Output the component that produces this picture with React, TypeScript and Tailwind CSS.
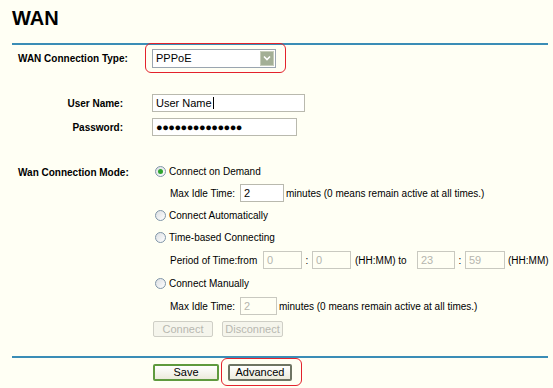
import React from 'react';

const font = { fontFamily: '"Liberation Sans", Arial, sans-serif' };

const Radio = ({ checked = false }: { checked?: boolean }) => (
  <span className="ml-[3px] mr-[3px] flex h-[11px] w-[11px] shrink-0 items-center justify-center rounded-full border border-[#7f95a8] bg-gradient-to-br from-[#dcdfe3] to-white">
    {checked && <span className="h-[5px] w-[5px] rounded-full bg-[#2fa52f]" />}
  </span>
);

const Field = ({ value, w, disabled = false }: { value: string; w: string; disabled?: boolean }) => (
  <div
    className={`flex h-[18px] ${w} shrink-0 items-center border px-[3px] text-[11px] ${
      disabled ? 'border-[#c9c9c0] text-[#b5b5ae]' : 'border-[#b9b9ae] bg-white text-black'
    }`}
  >
    {value}
  </div>
);

export default function App() {
  return (
    <div className="h-[388px] w-[553px] overflow-hidden whitespace-nowrap bg-[#fffff4] text-black" style={font}>
      <h1 className="pl-3 pt-[6px] text-[20px] font-bold leading-[24px]">WAN</h1>

      <div className="ml-3 mt-[13px] h-[2px] w-[536px] bg-[#3a8db6]" />

      {/* connection type */}
      <div className="-mt-[2px] flex h-[30px] items-center">
        <div className="w-[145px] shrink-0 pl-[18px] text-[10px] font-bold">WAN Connection Type:</div>
        <div className="flex h-[30px] w-[141px] items-center rounded-[6px] border-[1.5px] border-[#e3222c] pl-[6px]">
          <div className="flex h-[19px] w-[124px] items-center justify-between border border-[#9aa5b0] bg-white pl-[3px] pr-[1px] text-[11px]">
            <span>PPPoE</span>
            <span className="flex h-[15px] w-[14px] items-center justify-center border border-[#c6cdb9] bg-[#a3af95]">
              <svg width="8" height="6" viewBox="0 0 8 6">
                <path d="M1 1.5 L4 4.5 L7 1.5" stroke="white" strokeWidth="1.6" fill="none" />
              </svg>
            </span>
          </div>
        </div>
      </div>

      {/* account */}
      <div className="mt-[21px] flex h-[18px] items-center">
        <div className="w-[124px] shrink-0 pr-[1px] text-right text-[10px] font-bold">User Name:</div>
        <div className="ml-[28px] flex h-[18px] w-[153px] items-center border border-[#b9b9ae] bg-white px-[3px] text-[11px]">
          User Name<span className="ml-[1px] h-[12px] w-[1px] bg-black" />
        </div>
      </div>
      <div className="mt-[6px] flex h-[18px] items-center">
        <div className="w-[124px] shrink-0 pr-[1px] text-right text-[10px] font-bold">Password:</div>
        <div className="ml-[28px] flex h-[18px] w-[145px] items-center border border-[#b9b9ae] bg-white px-[3px] text-[11px] tracking-[-0.5px]">
          ●●●●●●●●●●●●●●
        </div>
      </div>

      {/* mode */}
      <div className="mt-[24px] flex">
        <div className="w-[152px] shrink-0 pl-[18px] pt-[5px] text-[10px] font-bold">Wan Connection Mode:</div>
        <div className="flex flex-col text-[10px]">
          <div className="flex h-[22px] items-center">
            <Radio checked />
            Connect on Demand
          </div>
          <div className="flex h-[22px] items-center pl-[18px]">
            <span className="w-[70px] shrink-0">Max Idle Time:</span>
            <Field value="2" w="w-[44px]" />
            <span className="ml-[2px]">minutes (0 means remain active at all times.)</span>
          </div>
          <div className="flex h-[22px] items-center">
            <Radio />
            Connect Automatically
          </div>
          <div className="flex h-[22px] items-center">
            <Radio />
            Time-based Connecting
          </div>
          <div className="flex h-[24px] items-center pl-[18px]">
            <span className="w-[93px] shrink-0">Period of Time:from</span>
            <Field value="0" w="w-[39px]" disabled />
            <span className="w-[10px] shrink-0 text-center">:</span>
            <Field value="0" w="w-[39px]" disabled />
            <span className="ml-[4px] w-[62px] shrink-0">(HH:MM) to</span>
            <Field value="23" w="w-[38px]" disabled />
            <span className="w-[10px] shrink-0 text-center">:</span>
            <Field value="59" w="w-[40px]" disabled />
            <span className="ml-[3px]">(HH:MM)</span>
          </div>
          <div className="flex h-[22px] items-center">
            <Radio />
            Connect Manually
          </div>
          <div className="flex h-[24px] items-center pl-[18px]">
            <span className="w-[70px] shrink-0">Max Idle Time:</span>
            <Field value="2" w="w-[37px]" disabled />
            <span className="ml-[2px]">minutes (0 means remain active at all times.)</span>
          </div>
          <div className="flex h-[22px] items-center gap-[9px] pl-[1px]">
            <button className="h-[16px] w-[60px] rounded-[2px] border border-[#cfcfc6] bg-[#f5f5ec] text-[11px] leading-none text-[#b8b8b0]">
              Connect
            </button>
            <button className="h-[16px] w-[61px] rounded-[2px] border border-[#cfcfc6] bg-[#f5f5ec] text-[11px] leading-none text-[#b8b8b0]">
              Disconnect
            </button>
          </div>
        </div>
      </div>

      <div className="ml-3 mt-[16px] h-[2px] w-[536px] bg-[#3a8db6]" />

      {/* actions */}
      <div className="flex h-[28px] items-center pl-[153px]">
        <button className="h-[17px] w-[66px] rounded-[2px] border-2 border-[#5f9a3e] bg-gradient-to-b from-white to-[#ecebdc] text-[11px] leading-none">
          Save
        </button>
        <div className="ml-[2px] flex h-[28px] w-[81px] items-center rounded-[6px] border-[1.5px] border-[#e3222c] pl-[6px]">
          <button className="h-[17px] w-[64px] rounded-[2px] border-2 border-[#6e7463] bg-gradient-to-b from-white to-[#ecebdc] text-[11px] leading-none">
            Advanced
          </button>
        </div>
      </div>
    </div>
  );
}
